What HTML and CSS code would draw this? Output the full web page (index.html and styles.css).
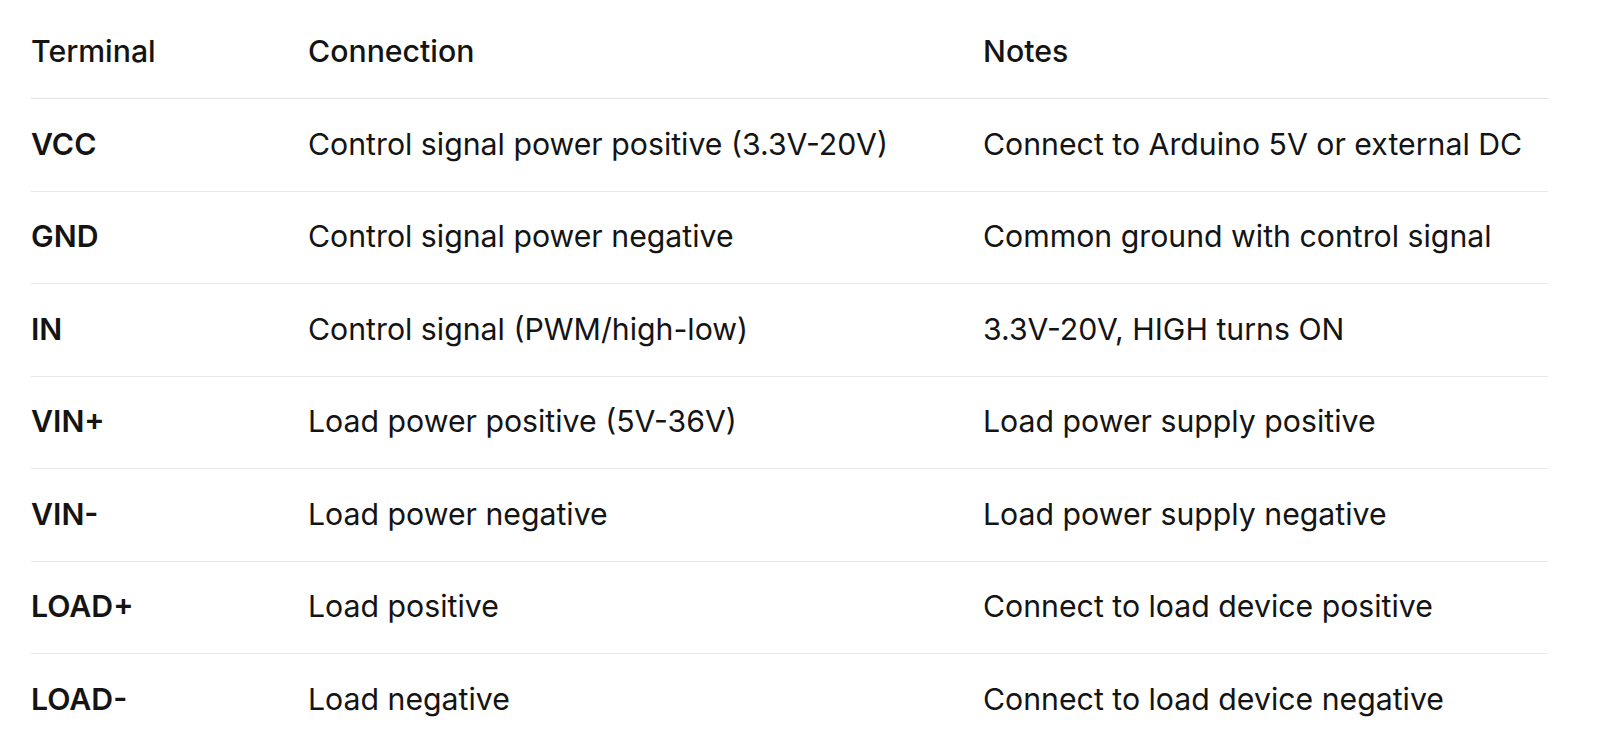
FILE: index.html
```html
<!DOCTYPE html>
<html lang="en">
<head>
<meta charset="utf-8">
<title>Terminal connections</title>
<link rel="stylesheet" href="styles.css">
</head>
<body>
<table class="pins">
  <colgroup>
    <col class="c1">
    <col class="c2">
    <col class="c3">
  </colgroup>
  <thead>
    <tr><th>Terminal</th><th>Connection</th><th>Notes</th></tr>
  </thead>
  <tbody>
    <tr><td class="term">VCC</td><td>Control signal power positive (3.3V-20V)</td><td>Connect to Arduino 5V or external DC</td></tr>
    <tr><td class="term">GND</td><td>Control signal power negative</td><td>Common ground with control signal</td></tr>
    <tr><td class="term">IN</td><td>Control signal (PWM/high-low)</td><td>3.3V-20V, HIGH turns ON</td></tr>
    <tr><td class="term">VIN+</td><td>Load power positive (5V-36V)</td><td>Load power supply positive</td></tr>
    <tr><td class="term">VIN-</td><td>Load power negative</td><td>Load power supply negative</td></tr>
    <tr><td class="term">LOAD+</td><td>Load positive</td><td>Connect to load device positive</td></tr>
    <tr><td class="term">LOAD-</td><td>Load negative</td><td>Connect to load device negative</td></tr>
  </tbody>
</table>
</body>
</html>
```
FILE: styles.css
```css
html, body {
  margin: 0;
  padding: 0;
  background: #ffffff;
}
body {
  padding: 6.5px 52px 0 31px;
  font-family: Inter, "Noto Sans", "Liberation Sans", sans-serif;
  color: #141414;
}
.pins {
  width: 1517px;
  border-collapse: collapse;
  table-layout: fixed;
  font-size: 30.25px;
  line-height: 36px;
}
.c1 { width: 277px; }
.c2 { width: 675px; }
.c3 { width: auto; }
.pins th,
.pins td {
  text-align: left;
  padding: 26.5px 0 29px;
  white-space: nowrap;
}
.pins th {
  font-weight: 500;
  border-bottom: 1.5px solid #e3e3e3;
}
.pins td {
  font-weight: 400;
}
.pins tbody tr:not(:last-child) td {
  border-bottom: 1.5px solid #e8e8e8;
}
.pins td.term {
  font-weight: 600;
}
```
